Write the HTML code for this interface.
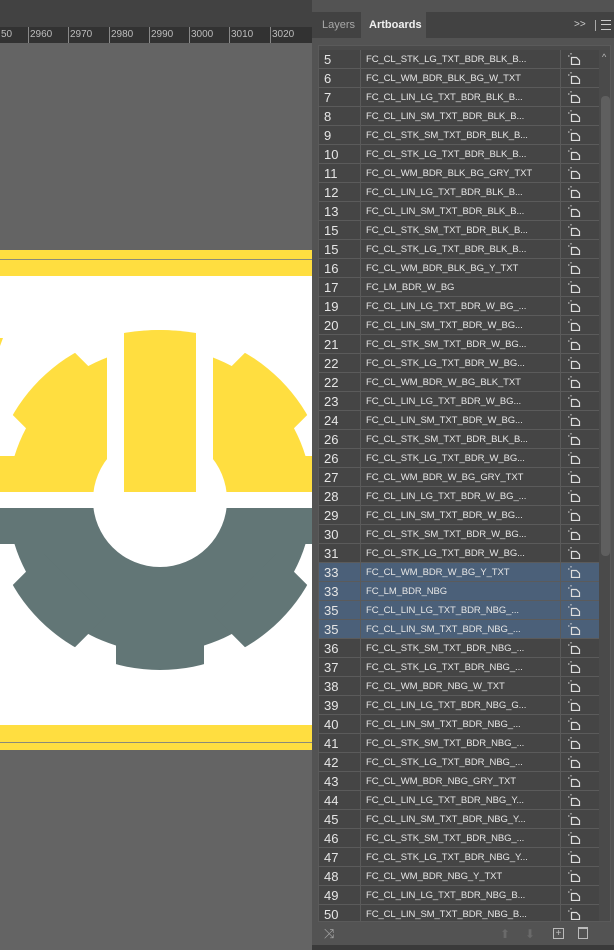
<!DOCTYPE html>
<html><head><meta charset="utf-8"><style>
*{margin:0;padding:0;box-sizing:border-box}
body{width:614px;height:950px;overflow:hidden;background:#424242;position:relative;font-family:"Liberation Sans",sans-serif}
#top{position:absolute;left:0;top:0;width:312px;height:27px;background:#424242}
#ruler{position:absolute;left:0;top:27px;width:312px;height:16px;background:#323232;color:#bdbdbd;font-size:10px}
#ruler span{position:absolute;top:2px}
#ruler i{position:absolute;bottom:0;width:1px;background:#888}
#canvas{position:absolute;left:0;top:43px;width:312px;height:907px;background:#646464;overflow:hidden}
#panel{position:absolute;left:312px;top:0;width:302px;height:950px;background:#535353}
#tabbar{position:absolute;left:0;top:12px;width:302px;height:26px;background:#424242}
.tab{position:absolute;top:0;height:26px;line-height:26px;font-size:11px}
#list{position:absolute;left:6px;top:45px;width:293px;height:877px;background:#4a4a4a;border:1px solid #5a5a5a;overflow:hidden}
.row{position:absolute;left:0;width:280px;height:19px;border-bottom:1px solid #5b5b5b;background:#454545;color:#e6e6e6}
.row.sel{background:#4b6079}
.row .n{position:absolute;left:5px;top:2px;font-size:13px;width:36px}
.row .t{position:absolute;left:47px;top:4px;font-size:9.5px;letter-spacing:-0.1px;white-space:nowrap}
.row .c1{position:absolute;left:41px;top:0;width:1px;height:19px;background:#5b5b5b}
.row .c2{position:absolute;left:241px;top:0;width:1px;height:19px;background:#5b5b5b}
.row svg{position:absolute;left:249px;top:3px}
#sb{position:absolute;left:281px;top:0;width:11px;height:877px;background:#4a4a4a}
#thumb{position:absolute;left:282px;top:50px;width:9px;height:460px;background:#5f5f5f;border-radius:4px}
</style></head><body>
<div id="top"></div>
<div id="ruler">
<span style="left:1px">50</span><span style="left:30px">2960</span><span style="left:70px">2970</span><span style="left:111px">2980</span><span style="left:151px">2990</span><span style="left:191px">3000</span><span style="left:231px">3010</span><span style="left:272px">3020</span>
<i style="left:28px;height:16px"></i><i style="left:68px;height:16px"></i><i style="left:109px;height:16px"></i><i style="left:149px;height:16px"></i><i style="left:189px;height:16px"></i><i style="left:229px;height:16px"></i><i style="left:270px;height:16px"></i>
</div>
<div id="canvas">
<svg width="312" height="907" viewBox="0 43 312 907" style="position:absolute;left:0;top:0">
<defs>
<clipPath id="up"><rect x="0" y="0" width="312" height="492"/></clipPath>
<clipPath id="dn"><rect x="0" y="508" width="312" height="500"/></clipPath>
<clipPath id="circ"><circle cx="160" cy="500" r="170"/></clipPath>
<g id="gear">
<circle cx="160" cy="500" r="152"/>
<g clip-path="url(#circ)">
<g transform="translate(160 500)">
<rect x="-44" y="-180" width="88" height="60" transform="rotate(0)"/>
<rect x="-44" y="-180" width="88" height="60" transform="rotate(45)"/>
<rect x="-44" y="-180" width="88" height="60" transform="rotate(-45)"/>
<rect x="-44" y="-180" width="88" height="60" transform="rotate(135)"/>
<rect x="-44" y="-180" width="88" height="60" transform="rotate(-135)"/>
<rect x="-44" y="-180" width="88" height="60" transform="rotate(180)"/>
</g>
</g>
</g>
</defs>
<rect x="0" y="250" width="312" height="500" fill="#fff"/>
<rect x="0" y="250" width="312" height="26" fill="#ffde40"/>
<rect x="0" y="259" width="312" height="1" fill="#8a8a7a"/>
<rect x="0" y="725" width="312" height="25" fill="#ffde40"/>
<rect x="0" y="742" width="312" height="1" fill="#8a8a7a"/>
<g clip-path="url(#up)" fill="#ffde40"><use href="#gear"/><rect x="0" y="456" width="312" height="40"/></g>
<g clip-path="url(#dn)" fill="#627676"><use href="#gear"/><rect x="0" y="505" width="312" height="39"/></g>
<rect x="107" y="300" width="17" height="192" fill="#fff"/>
<rect x="196" y="300" width="17" height="192" fill="#fff"/>
<circle cx="160" cy="500" r="67" fill="#fff"/>
<path d="M124 333 Q160 327 196 333 L196 492 L124 492Z" fill="#ffde40"/>
<path d="M0 338 L3 338 L0 346Z" fill="#ffde40"/>
<rect x="0" y="492" width="312" height="16" fill="#fff"/>
</svg>
</div>
<div id="panel">
<div id="tabbar">
<div class="tab" style="left:10px;color:#a8a8a8">Layers</div>
<div class="tab" style="left:49px;width:65px;background:#535353;color:#f0f0f0;font-weight:bold;padding-left:8px">Artboards</div>
<div class="tab" style="left:262px;color:#ccc;font-size:10px">&gt;&gt;</div>
<div style="position:absolute;left:283px;top:8px;width:1px;height:11px;background:#aaa"></div>
<div style="position:absolute;left:289px;top:8px;width:10px;height:10px;border-top:1px solid #ccc;border-bottom:1px solid #ccc"><div style="margin-top:3px;height:1px;background:#ccc"></div></div>
</div>
<div id="list">
<div id="rows"></div>
<div id="sb"></div>
<div id="thumb"></div>
<div style="position:absolute;left:283px;top:6px;color:#bbb;font-size:9px">^</div>
</div>
<div style="position:absolute;left:12px;top:926px;color:#aaa;font-size:13px">⤨</div>
<div style="position:absolute;left:188px;top:927px;color:#6a6a6a;font-size:12px">⬆</div>
<div style="position:absolute;left:213px;top:927px;color:#6a6a6a;font-size:12px">⬇</div>
<div style="position:absolute;left:241px;top:928px;width:11px;height:11px;border:1px solid #bbb;color:#bbb;font-size:10px;line-height:9px;text-align:center">+</div>
<div style="position:absolute;left:266px;top:927px;width:10px;height:12px;border:1px solid #bbb;border-top:2px solid #bbb"></div>
<div style="position:absolute;left:0;top:945px;width:302px;height:5px;background:#3a3a3a"></div>
</div>
<script>
var d=[["5","FC_CL_STK_LG_TXT_BDR_BLK_B..."],["6","FC_CL_WM_BDR_BLK_BG_W_TXT"],["7","FC_CL_LIN_LG_TXT_BDR_BLK_B..."],["8","FC_CL_LIN_SM_TXT_BDR_BLK_B..."],["9","FC_CL_STK_SM_TXT_BDR_BLK_B..."],["10","FC_CL_STK_LG_TXT_BDR_BLK_B..."],["11","FC_CL_WM_BDR_BLK_BG_GRY_TXT"],["12","FC_CL_LIN_LG_TXT_BDR_BLK_B..."],["13","FC_CL_LIN_SM_TXT_BDR_BLK_B..."],["15","FC_CL_STK_SM_TXT_BDR_BLK_B..."],["15","FC_CL_STK_LG_TXT_BDR_BLK_B..."],["16","FC_CL_WM_BDR_BLK_BG_Y_TXT"],["17","FC_LM_BDR_W_BG"],["19","FC_CL_LIN_LG_TXT_BDR_W_BG_..."],["20","FC_CL_LIN_SM_TXT_BDR_W_BG..."],["21","FC_CL_STK_SM_TXT_BDR_W_BG..."],["22","FC_CL_STK_LG_TXT_BDR_W_BG..."],["22","FC_CL_WM_BDR_W_BG_BLK_TXT"],["23","FC_CL_LIN_LG_TXT_BDR_W_BG..."],["24","FC_CL_LIN_SM_TXT_BDR_W_BG..."],["26","FC_CL_STK_SM_TXT_BDR_BLK_B..."],["26","FC_CL_STK_LG_TXT_BDR_W_BG..."],["27","FC_CL_WM_BDR_W_BG_GRY_TXT"],["28","FC_CL_LIN_LG_TXT_BDR_W_BG_..."],["29","FC_CL_LIN_SM_TXT_BDR_W_BG..."],["30","FC_CL_STK_SM_TXT_BDR_W_BG..."],["31","FC_CL_STK_LG_TXT_BDR_W_BG..."],["33","FC_CL_WM_BDR_W_BG_Y_TXT",1],["33","FC_LM_BDR_NBG",1],["35","FC_CL_LIN_LG_TXT_BDR_NBG_...",1],["35","FC_CL_LIN_SM_TXT_BDR_NBG_...",1],["36","FC_CL_STK_SM_TXT_BDR_NBG_..."],["37","FC_CL_STK_LG_TXT_BDR_NBG_..."],["38","FC_CL_WM_BDR_NBG_W_TXT"],["39","FC_CL_LIN_LG_TXT_BDR_NBG_G..."],["40","FC_CL_LIN_SM_TXT_BDR_NBG_..."],["41","FC_CL_STK_SM_TXT_BDR_NBG_..."],["42","FC_CL_STK_LG_TXT_BDR_NBG_..."],["43","FC_CL_WM_BDR_NBG_GRY_TXT"],["44","FC_CL_LIN_LG_TXT_BDR_NBG_Y..."],["45","FC_CL_LIN_SM_TXT_BDR_NBG_Y..."],["46","FC_CL_STK_SM_TXT_BDR_NBG_..."],["47","FC_CL_STK_LG_TXT_BDR_NBG_Y..."],["48","FC_CL_WM_BDR_NBG_Y_TXT"],["49","FC_CL_LIN_LG_TXT_BDR_NBG_B..."],["50","FC_CL_LIN_SM_TXT_BDR_NBG_B..."]];
var h="";
d.forEach(function(r,i){
h+='<div class="row'+(r[2]?' sel':'')+'" style="top:'+(4+i*19)+'px"><div class="n">'+r[0]+'</div><div class="c1"></div><div class="t">'+r[1]+'</div><div class="c2"></div><svg width="13" height="12" viewBox="0 0 13 12"><path d="M3 0v1.5M0 3h1.5" stroke="#ddd" stroke-width="1"/><path d="M3.5 4.5h5l3 3v4h-8z" fill="none" stroke="#ddd" stroke-width="1.2"/></svg></div>';
});
document.getElementById("rows").innerHTML=h;
</script>
</body></html>
